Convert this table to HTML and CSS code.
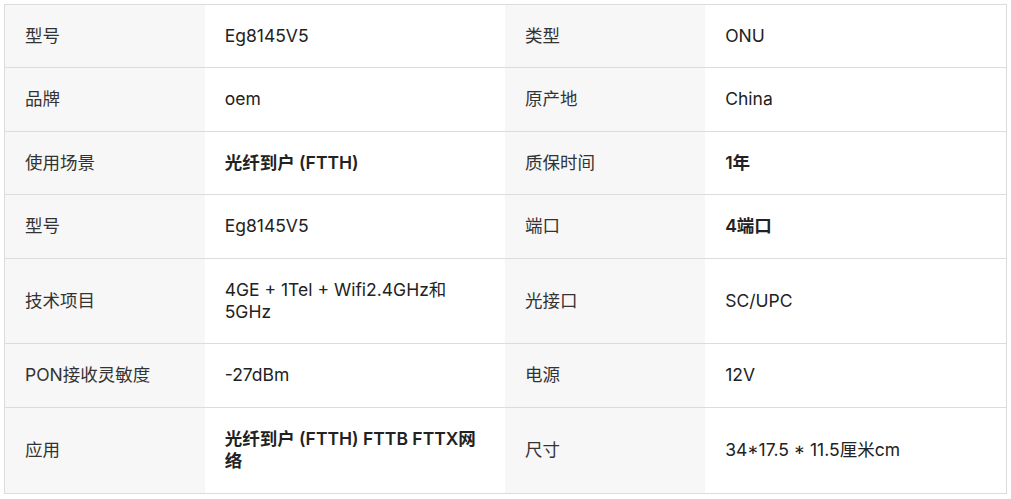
FILE: index.html
```html
<!DOCTYPE html>
<html lang="zh-CN">
<head>
<meta charset="utf-8">
<link rel="stylesheet" href="styles.css">
</head>
<body>
<div class="wrap">
<table class="spec">
<colgroup><col class="c-label"><col class="c-value"><col class="c-label"><col class="c-value2"></colgroup>
<tbody>
<tr><td class="label">型号</td><td class="value">Eg8145V5</td><td class="label">类型</td><td class="value">ONU</td></tr>
<tr><td class="label">品牌</td><td class="value">oem</td><td class="label">原产地</td><td class="value">China</td></tr>
<tr><td class="label">使用场景</td><td class="value strong">光纤到户 (FTTH)</td><td class="label">质保时间</td><td class="value strong">1年</td></tr>
<tr><td class="label">型号</td><td class="value">Eg8145V5</td><td class="label">端口</td><td class="value strong">4端口</td></tr>
<tr><td class="label">技术项目</td><td class="value">4GE + 1Tel + Wifi2.4GHz和5GHz</td><td class="label">光接口</td><td class="value">SC/UPC</td></tr>
<tr><td class="label">PON接收灵敏度</td><td class="value">-27dBm</td><td class="label">电源</td><td class="value">12V</td></tr>
<tr><td class="label">应用</td><td class="value strong">光纤到户 (FTTH) FTTB FTTX网络</td><td class="label">尺寸</td><td class="value">34*17.5 * 11.5厘米cm</td></tr>
</tbody>
</table>
</div>
</body>
</html>
```
FILE: styles.css
```css
html, body {
  margin: 0;
  padding: 0;
  background: #fff;
}
.wrap {
  padding: 4px;
}
.spec {
  width: 1003px;
  border-collapse: collapse;
  table-layout: fixed;
  border: 1px solid #dcdcdc;
  font-family: Inter, "Noto Sans CJK SC", sans-serif;
  font-size: 17.5px;
  line-height: 22.4px;
  color: #222;
}
.c-label { width: 200px; }
.c-value { width: 300px; }
.c-value2 { width: 301px; }
.spec td {
  padding: 20px;
  border-top: 1px solid #dcdcdc;
  vertical-align: middle;
  text-align: left;
}
.spec .label {
  background: #f7f7f7;
  color: #333;
}
.spec .value {
  background: #fff;
}
.spec .strong {
  font-weight: 600;
}
```
